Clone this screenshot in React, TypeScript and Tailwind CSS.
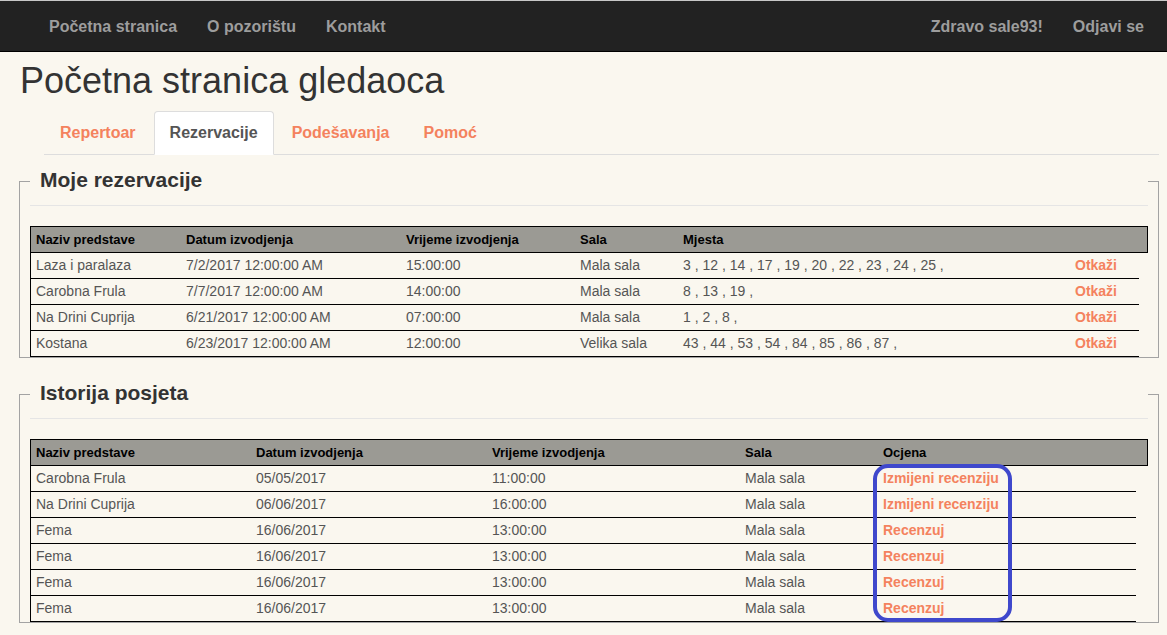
import React from "react";

const font = { fontFamily: '"Liberation Sans", Arial, Helvetica, sans-serif' };

type Col = { w: string; label: string };

const resCols: Col[] = [
  { w: "w-[150px]", label: "Naziv predstave" },
  { w: "w-[220px]", label: "Datum izvodjenja" },
  { w: "w-[174px]", label: "Vrijeme izvodjenja" },
  { w: "w-[103px]", label: "Sala" },
  { w: "w-[392px]", label: "Mjesta" },
  { w: "flex-1", label: "" },
];

const resRows = [
  ["Laza i paralaza", "7/2/2017 12:00:00 AM", "15:00:00", "Mala sala", "3 , 12 , 14 , 17 , 19 , 20 , 22 , 23 , 24 , 25 ,"],
  ["Carobna Frula", "7/7/2017 12:00:00 AM", "14:00:00", "Mala sala", "8 , 13 , 19 ,"],
  ["Na Drini Cuprija", "6/21/2017 12:00:00 AM", "07:00:00", "Mala sala", "1 , 2 , 8 ,"],
  ["Kostana", "6/23/2017 12:00:00 AM", "12:00:00", "Velika sala", "43 , 44 , 53 , 54 , 84 , 85 , 86 , 87 ,"],
];

const histCols: Col[] = [
  { w: "w-[220px]", label: "Naziv predstave" },
  { w: "w-[236px]", label: "Datum izvodjenja" },
  { w: "w-[253px]", label: "Vrijeme izvodjenja" },
  { w: "w-[138px]", label: "Sala" },
  { w: "flex-1", label: "Ocjena" },
];

const histRows = [
  ["Carobna Frula", "05/05/2017", "11:00:00", "Mala sala", "Izmijeni recenziju"],
  ["Na Drini Cuprija", "06/06/2017", "16:00:00", "Mala sala", "Izmijeni recenziju"],
  ["Fema", "16/06/2017", "13:00:00", "Mala sala", "Recenzuj"],
  ["Fema", "16/06/2017", "13:00:00", "Mala sala", "Recenzuj"],
  ["Fema", "16/06/2017", "13:00:00", "Mala sala", "Recenzuj"],
  ["Fema", "16/06/2017", "13:00:00", "Mala sala", "Recenzuj"],
];

function HeaderRow({ cols }: { cols: Col[] }) {
  return (
    <div className="flex h-[27px] items-center border border-black bg-[#9b9a94] text-[13px] font-bold text-black">
      {cols.map((c, i) => (
        <div key={i} className={`${c.w} shrink-0 pl-[5px] whitespace-nowrap`}>
          {c.label}
        </div>
      ))}
    </div>
  );
}

function Section({ title, children }: { title: string; children: React.ReactNode }) {
  return (
    <fieldset className="border border-[#a3a3a3] px-[10px] pb-0 pt-0">
      <legend className="w-full border-b border-[#e5e5e5] pt-[9px] pb-[10px] pl-[10px] text-[21px] leading-[30px] font-bold text-[#333] mb-[20px]">
        {title}
      </legend>
      {children}
    </fieldset>
  );
}

export default function App() {
  return (
    <div style={font} className="min-h-[635px] bg-[#faf7ef] text-[14px]">
      {/* Navbar */}
      <div className="border-t border-[#c8c8c8]">
        <div className="flex h-[51px] items-center justify-between border-b border-black bg-[#222222] pl-[34px] pr-[8px] pt-[2px] text-[16px] font-bold text-[#9d9d9d]">
          <div className="flex">
            <span className="px-[15px]">Početna stranica</span>
            <span className="px-[15px]">O pozorištu</span>
            <span className="px-[15px]">Kontakt</span>
          </div>
          <div className="flex">
            <span className="px-[15px]">Zdravo sale93!</span>
            <span className="px-[15px]">Odjavi se</span>
          </div>
        </div>
      </div>

      <div className="pl-[19px] pr-[8px]">
        <h1 className="mt-[9px] pl-[1px] text-[36px] leading-[40px] text-[#333]">Početna stranica gledaoca</h1>

        {/* Tabs */}
        <div className="ml-[25px] mt-[10px] flex border-b border-[#dddddd] text-[16px] font-bold leading-[22px]">
          <span className="mr-[2px] -mb-px border border-transparent px-[15px] py-[10px] text-[#f4825e]">Repertoar</span>
          <span className="mr-[2px] -mb-px rounded-t-[4px] border border-[#dddddd] border-b-transparent bg-white px-[15px] py-[10px] text-[#555]">
            Rezervacije
          </span>
          <span className="mr-[2px] -mb-px border border-transparent px-[15px] py-[10px] text-[#f4825e]">Podešavanja</span>
          <span className="mr-[2px] -mb-px border border-transparent px-[15px] py-[10px] text-[#f4825e]">Pomoć</span>
        </div>

        <div className="mt-[1px]">
          <Section title="Moje rezervacije">
            <div>
              <HeaderRow cols={resCols} />
              {resRows.map((r, i) => (
                <div key={i} className="mr-[9px] flex h-[26px] items-center border-b border-l border-black text-[14px] text-[#555]">
                  {r.map((c, j) => (
                    <div key={j} className={`${resCols[j].w} shrink-0 pl-[5px] whitespace-nowrap`}>
                      {c}
                    </div>
                  ))}
                  <div className="flex-1 pl-[5px] font-bold text-[#f4825e]">Otkaži</div>
                </div>
              ))}
            </div>
          </Section>
        </div>

        <div className="mt-[11px]">
          <Section title="Istorija posjeta">
            <div className="relative">
              <HeaderRow cols={histCols} />
              {histRows.map((r, i) => (
                <div key={i} className="mr-[12px] flex h-[26px] items-center border-b border-l border-black text-[14px] text-[#555]">
                  {r.map((c, j) =>
                    j === 4 ? (
                      <div key={j} className="flex-1 pl-[5px] font-bold text-[#f4825e] whitespace-nowrap">
                        {c}
                      </div>
                    ) : (
                      <div key={j} className={`${histCols[j].w} shrink-0 pl-[5px] whitespace-nowrap`}>
                        {c}
                      </div>
                    )
                  )}
                </div>
              ))}
              <div className="pointer-events-none absolute left-[843px] top-[25px] h-[158px] w-[139px] rounded-[15px] border-[4px] border-[#3f48cc]" />
            </div>
          </Section>
        </div>
      </div>
    </div>
  );
}
